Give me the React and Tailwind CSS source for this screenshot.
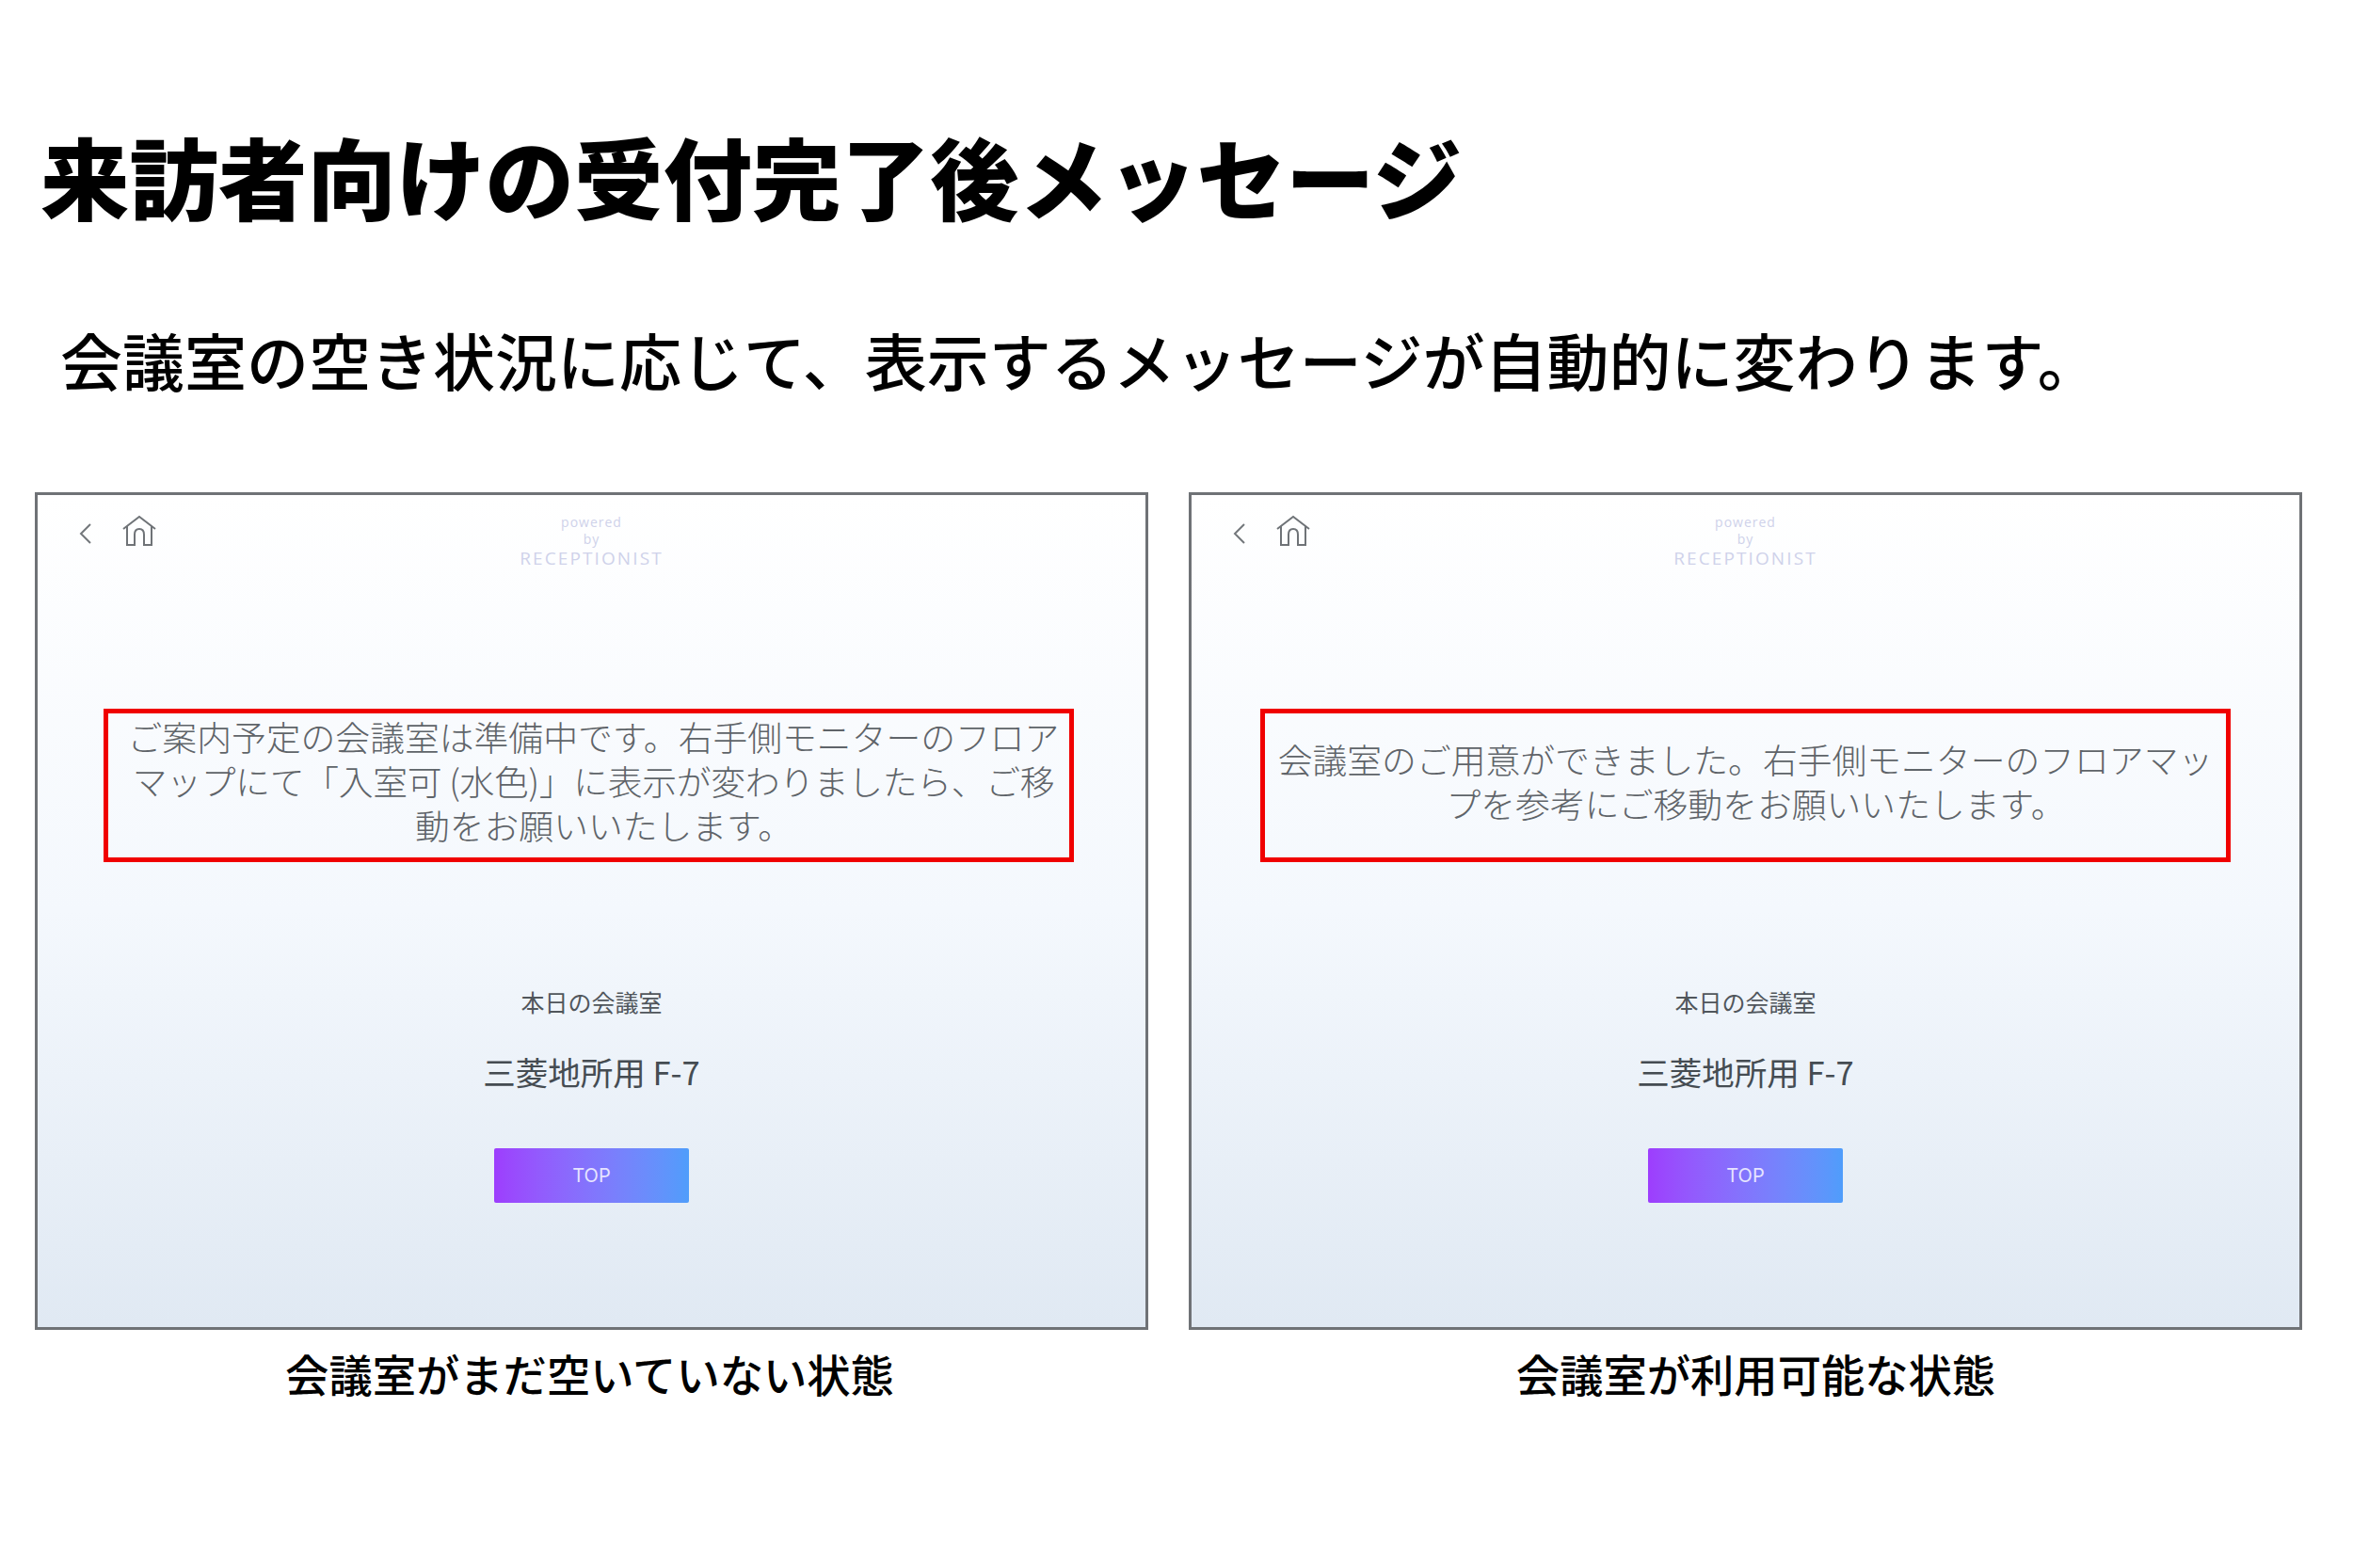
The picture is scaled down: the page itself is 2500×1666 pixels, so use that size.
const jp = "font-['Noto_Sans_CJK_JP','Noto_Sans',sans-serif]";

const Panel = ({ boxClass = '', children }) => (
  <div className="w-[1183px] h-[890px] border-[3px] border-[#6f7276] bg-gradient-to-b from-white via-[#f4f8fd] to-[#e0e9f3] flex flex-col items-center">
    <div className="w-full h-[87px] pt-[20px] grid grid-cols-[1fr_auto_1fr]">
      <div className="flex items-start pl-[44px] pt-[1px] gap-[31px]">
        <svg width="14" height="24" viewBox="0 0 14 24" fill="none" stroke="#73777b" strokeWidth="2" className="mt-[8px]">
          <path d="M12 2 L2 12 L12 22" />
        </svg>
        <svg width="38" height="34" viewBox="0 0 38 34" fill="none" stroke="#6f7377" strokeWidth="2">
          <path d="M2 15 L19 2 L36 15" />
          <path d="M6 12 V32 H14 V21 Q14 15 19 15 Q24 15 24 21 V32 H32 V12" />
        </svg>
      </div>
      <div className="flex flex-col items-center text-[#cfd2ea] font-['Open_Sans',sans-serif]">
        <span className="text-[14px] leading-[18px] tracking-[1px]">powered</span>
        <span className="text-[14px] leading-[17px] tracking-[1px]">by</span>
        <span className="text-[19px] leading-[25px] tracking-[2.1px]">RECEPTIONIST</span>
      </div>
      <div />
    </div>
    <div className={`mt-[140px] w-[1031px] h-[163px] pb-[10px] border-[5px] border-[#f00000] flex items-center justify-center text-center text-[36.8px] leading-[47px] font-light text-[#5f6469] whitespace-nowrap ${boxClass} ${jp}`}>
      <p>{children}</p>
    </div>
    <div className={`mt-[132px] text-[25px] leading-[32px] text-[#50565b] ${jp}`}>本日の会議室</div>
    <div className={`mt-[33px] text-[34.5px] leading-[50px] text-[#454c52] ${jp}`}>三菱地所用 F-7</div>
    <div className="mt-[57px] w-[207px] h-[58px] rounded-[2px] bg-gradient-to-r from-[#9d3dfd] to-[#4f9dfb] flex items-center justify-center text-[20px] text-[#e6e4ff] font-['Inter',sans-serif]">
      TOP
    </div>
  </div>
);

export default function App() {
  return (
    <div className={`w-[2500px] h-[1666px] bg-white text-black overflow-hidden ${jp}`}>
      <h1 className="pt-[126px] pl-[43px] text-[94.5px] leading-[120px] font-black whitespace-nowrap">来訪者向けの受付完了後メッセージ</h1>
      <p className="mt-[95px] pl-[64px] text-[66px] leading-[80px] font-medium whitespace-nowrap">会議室の空き状況に応じて、表示するメッセージが自動的に変わります。</p>
      <div className="mt-[102px] pl-[37px] flex gap-[43px]">
        <div className="flex flex-col items-center">
          <Panel boxClass="mr-[6px] pl-[10px]">
            ご案内予定の会議室は準備中です。右手側モニターのフロア<br />
            <span className="tracking-[-0.3px]">マップにて「入室可 (水色)」に表示が変わりましたら、ご移</span><br />
            <span className="inline-block pl-[22px]">動をお願いいたします。</span>
          </Panel>
          <div className="mt-[16px] text-[46.3px] leading-[60px] font-medium pr-[4px]">会議室がまだ空いていない状態</div>
        </div>
        <div className="flex flex-col items-center">
          <Panel>
            会議室のご用意ができました。右手側モニターのフロアマッ<br />
            <span className="inline-block pl-[22px]">プを参考にご移動をお願いいたします。</span>
          </Panel>
          <div className="mt-[16px] text-[46.3px] leading-[60px] font-medium pl-[22px]">会議室が利用可能な状態</div>
        </div>
      </div>
    </div>
  );
}
